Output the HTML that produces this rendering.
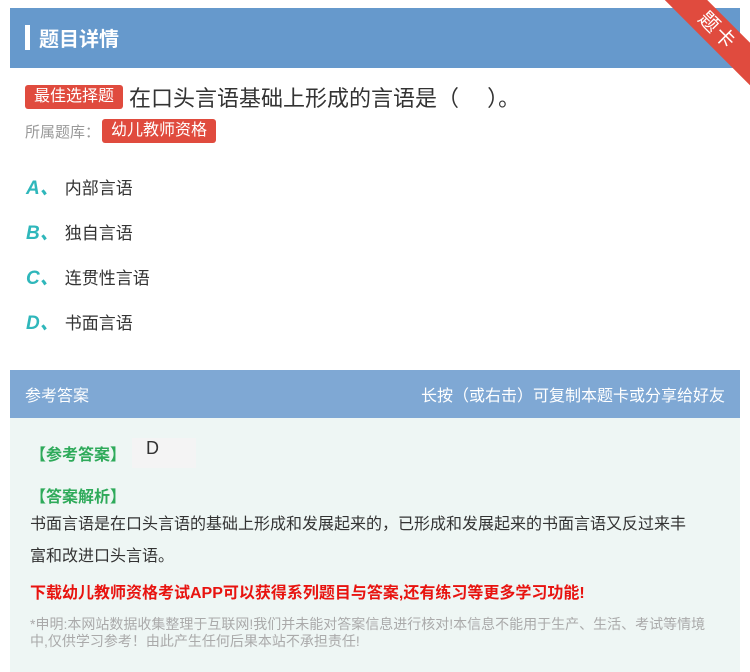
<!DOCTYPE html>
<html><head><meta charset="utf-8"><style>
*{margin:0;padding:0;box-sizing:border-box}
body{width:750px;height:672px;background:#fff;font-family:"Liberation Sans","Noto Sans CJK SC",sans-serif;position:relative;overflow:hidden}
.hdr{position:absolute;left:10px;top:8px;width:730px;height:60px;background:#6699cc}
.hdr .bar{position:absolute;left:15px;top:17px;width:5px;height:25px;background:#fff}
.hdr .t{position:absolute;left:29px;top:15px;color:#fff;font-size:20px;font-weight:bold}
.rib{position:absolute;right:-32px;top:16px;width:130px;height:30px;background:#e04b3e;transform:rotate(45deg);color:#fff;font-size:20px;text-align:center;line-height:30px;letter-spacing:2px}
.tag{display:inline-block;background:#e04b3e;color:#fff;border-radius:3px;font-size:16px;padding:0 9px;height:24px;line-height:24px}
.q{position:absolute;left:25px;top:81px;font-size:22px;color:#333;display:flex;align-items:center;gap:6px}
.lib{position:absolute;left:25px;top:119px;font-size:15px;color:#999;display:flex;align-items:center;gap:2px}
.opt{position:absolute;left:26px;font-size:17px;color:#333}
.opt b{color:#2fb7bb;font-style:italic;font-size:19px;margin-right:6px}
.ah{position:absolute;left:10px;top:370px;width:730px;height:48px;background:#7fa8d4;color:#fff;font-size:16px}
.ab{position:absolute;left:10px;top:418px;width:730px;height:254px;background:#eef6f4}
.g{color:#2eaa5a;font-weight:bold;font-size:16px}
</style></head><body>
<div class="hdr"><div class="bar"></div><div class="t">题目详情</div></div>
<div class="rib">题卡</div>
<div class="q"><span class="tag">最佳选择题</span><span>在口头言语基础上形成的言语是（　 ）。</span></div>
<div class="lib"><span>所属题库：</span><span class="tag">幼儿教师资格</span></div>
<div class="opt" style="top:173px"><b>A、</b>内部言语</div>
<div class="opt" style="top:218px"><b>B、</b>独自言语</div>
<div class="opt" style="top:263px"><b>C、</b>连贯性言语</div>
<div class="opt" style="top:308px"><b>D、</b>书面言语</div>
<div class="ah"><span style="position:absolute;left:15px;top:12px">参考答案</span><span style="position:absolute;right:15px;top:12px">长按（或右击）可复制本题卡或分享给好友</span></div>
<div class="ab">
<div class="g" style="position:absolute;left:20px;top:23px">【参考答案】</div>
<div style="position:absolute;left:122px;top:20px;width:64px;height:30px;background:#f4f4f4;font-size:18px;color:#333;padding-left:14px">D</div>
<div class="g" style="position:absolute;left:20px;top:65px">【答案解析】</div>
<div style="position:absolute;left:20px;top:91px;width:665px;font-size:16px;line-height:32px;color:#333">书面言语是在口头言语的基础上形成和发展起来的，已形成和发展起来的书面言语又反过来丰富和改进口头言语。</div>
<div style="position:absolute;left:20px;top:161px;font-size:16px;color:#e8130f;font-weight:bold">下载幼儿教师资格考试APP可以获得系列题目与答案,还有练习等更多学习功能!</div>
<div style="position:absolute;left:20px;top:198px;width:690px;font-size:14px;line-height:17px;color:#aaa">*申明:本网站数据收集整理于互联网!我们并未能对答案信息进行核对!本信息不能用于生产、生活、考试等情境中,仅供学习参考！由此产生任何后果本站不承担责任!</div>
</div>
</body></html>
